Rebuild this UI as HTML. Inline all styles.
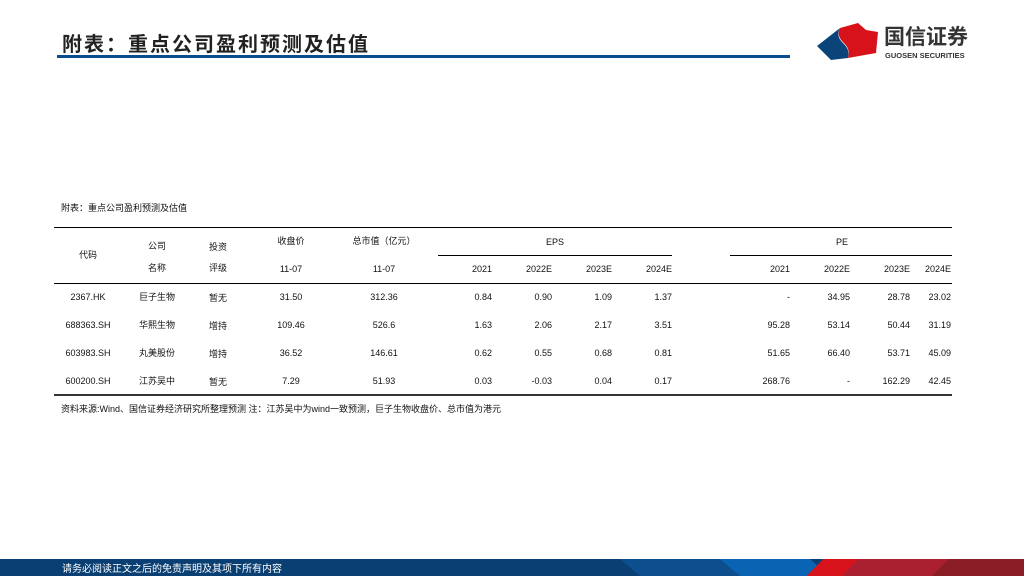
<!DOCTYPE html>
<html><head><meta charset="utf-8"><style>
*{margin:0;padding:0}
body{width:1024px;height:576px;position:relative;background:#fff;overflow:hidden;font-family:"Liberation Sans","Noto Sans CJK SC",sans-serif;color:#111}
.t{position:absolute;font-size:9px;white-space:nowrap;line-height:10px}
.c{transform:translateX(-50%)}
.r{transform:translateX(-100%)}
.l{position:absolute;background:#000}
</style></head><body>
<div style="position:absolute;left:62px;top:28px;font-size:20px;font-weight:bold;color:#222;letter-spacing:2px;font-family:'Noto Sans CJK SC',sans-serif">附表：重点公司盈利预测及估值</div>
<div style="position:absolute;left:57px;top:55px;width:733px;height:3px;background:#0a4d8c"></div>
<svg style="position:absolute;left:812px;top:20px" width="70" height="44" viewBox="0 0 70 44">
<path d="M28 8 L5 26 L19 40 L36 38 C38 30 34 26 30 22 C26 18 25 12 28 8Z" fill="#0a4479"/>
<path d="M28 8 C25 13 27 18 31 22 C36 27 38 31 36 38 L64 33 L66 12 L54 10 L46 3 Z" fill="#d7121b"/>
</svg>
<div style="position:absolute;left:884px;top:24px;font-size:21px;font-weight:bold;color:#333;font-family:'Noto Sans CJK SC',sans-serif;line-height:24px">国信证券</div>
<div style="position:absolute;left:885px;top:51px;font-size:7.5px;font-weight:bold;color:#333;line-height:9px">GUOSEN SECURITIES</div>

<div class="t" style="left:61px;top:203px">附表：重点公司盈利预测及估值</div>
<div class="l" style="left:54px;top:227px;width:898px;height:1px"></div>
<div class="l" style="left:438px;top:255px;width:234px;height:1px"></div>
<div class="l" style="left:730px;top:255px;width:222px;height:1px"></div>
<div class="l" style="left:54px;top:283px;width:898px;height:1px"></div>
<div class="l" style="left:54px;top:394px;width:898px;height:2px;background:#333"></div>

<div class="t c" style="left:88px;top:250px">代码</div>
<div class="t c" style="left:157px;top:241px">公司</div>
<div class="t c" style="left:157px;top:263px">名称</div>
<div class="t c" style="left:218px;top:242px">投资</div>
<div class="t c" style="left:218px;top:263px">评级</div>
<div class="t c" style="left:291px;top:236px">收盘价</div>
<div class="t c" style="left:291px;top:264px">11-07</div>
<div class="t c" style="left:384px;top:236px">总市值（亿元）</div>
<div class="t c" style="left:384px;top:264px">11-07</div>
<div class="t c" style="left:555px;top:237px">EPS</div>
<div class="t c" style="left:842px;top:237px">PE</div>
<div class="t r" style="left:492px;top:264px">2021</div>
<div class="t r" style="left:552px;top:264px">2022E</div>
<div class="t r" style="left:612px;top:264px">2023E</div>
<div class="t r" style="left:672px;top:264px">2024E</div>
<div class="t r" style="left:790px;top:264px">2021</div>
<div class="t r" style="left:850px;top:264px">2022E</div>
<div class="t r" style="left:910px;top:264px">2023E</div>
<div class="t r" style="left:951px;top:264px">2024E</div>

<div class="t c" style="left:88px;top:292px">2367.HK</div><div class="t c" style="left:157px;top:292px">巨子生物</div><div class="t c" style="left:218px;top:293px">暂无</div><div class="t c" style="left:291px;top:292px">31.50</div><div class="t c" style="left:384px;top:292px">312.36</div>
<div class="t r" style="left:492px;top:292px">0.84</div><div class="t r" style="left:552px;top:292px">0.90</div><div class="t r" style="left:612px;top:292px">1.09</div><div class="t r" style="left:672px;top:292px">1.37</div>
<div class="t r" style="left:790px;top:292px">-</div><div class="t r" style="left:850px;top:292px">34.95</div><div class="t r" style="left:910px;top:292px">28.78</div><div class="t r" style="left:951px;top:292px">23.02</div>

<div class="t c" style="left:88px;top:320px">688363.SH</div><div class="t c" style="left:157px;top:320px">华熙生物</div><div class="t c" style="left:218px;top:321px">增持</div><div class="t c" style="left:291px;top:320px">109.46</div><div class="t c" style="left:384px;top:320px">526.6</div>
<div class="t r" style="left:492px;top:320px">1.63</div><div class="t r" style="left:552px;top:320px">2.06</div><div class="t r" style="left:612px;top:320px">2.17</div><div class="t r" style="left:672px;top:320px">3.51</div>
<div class="t r" style="left:790px;top:320px">95.28</div><div class="t r" style="left:850px;top:320px">53.14</div><div class="t r" style="left:910px;top:320px">50.44</div><div class="t r" style="left:951px;top:320px">31.19</div>

<div class="t c" style="left:88px;top:348px">603983.SH</div><div class="t c" style="left:157px;top:348px">丸美股份</div><div class="t c" style="left:218px;top:349px">增持</div><div class="t c" style="left:291px;top:348px">36.52</div><div class="t c" style="left:384px;top:348px">146.61</div>
<div class="t r" style="left:492px;top:348px">0.62</div><div class="t r" style="left:552px;top:348px">0.55</div><div class="t r" style="left:612px;top:348px">0.68</div><div class="t r" style="left:672px;top:348px">0.81</div>
<div class="t r" style="left:790px;top:348px">51.65</div><div class="t r" style="left:850px;top:348px">66.40</div><div class="t r" style="left:910px;top:348px">53.71</div><div class="t r" style="left:951px;top:348px">45.09</div>

<div class="t c" style="left:88px;top:376px">600200.SH</div><div class="t c" style="left:157px;top:376px">江苏吴中</div><div class="t c" style="left:218px;top:377px">暂无</div><div class="t c" style="left:291px;top:376px">7.29</div><div class="t c" style="left:384px;top:376px">51.93</div>
<div class="t r" style="left:492px;top:376px">0.03</div><div class="t r" style="left:552px;top:376px">-0.03</div><div class="t r" style="left:612px;top:376px">0.04</div><div class="t r" style="left:672px;top:376px">0.17</div>
<div class="t r" style="left:790px;top:376px">268.76</div><div class="t r" style="left:850px;top:376px">-</div><div class="t r" style="left:910px;top:376px">162.29</div><div class="t r" style="left:951px;top:376px">42.45</div>

<div class="t" style="left:61px;top:404px">资料来源:Wind、国信证券经济研究所整理预测 注：江苏吴中为wind一致预测，巨子生物收盘价、总市值为港元</div>

<div style="position:absolute;left:0;top:559px;width:1024px;height:17px;background:#0a3f73;overflow:hidden">
<div style="position:absolute;left:630px;top:0;width:180px;height:17px;background:#0d4f8e;transform:skewX(50deg)"></div>
<div style="position:absolute;left:730px;top:0;width:90px;height:17px;background:#0a63b3;transform:skewX(50deg)"></div>
<div style="position:absolute;left:815px;top:0;width:60px;height:17px;background:#d7121b;transform:skewX(-45deg)"></div>
<div style="position:absolute;left:850px;top:0;width:110px;height:17px;background:#ab2030;transform:skewX(-45deg)"></div>
<div style="position:absolute;left:940px;top:0;width:100px;height:17px;background:#8a1d26;transform:skewX(-45deg)"></div>
<div style="position:absolute;left:62px;top:3px;font-size:10px;color:#fff;line-height:12px;font-family:'Noto Sans CJK SC',sans-serif">请务必阅读正文之后的免责声明及其项下所有内容</div>
</div>
</body></html>
